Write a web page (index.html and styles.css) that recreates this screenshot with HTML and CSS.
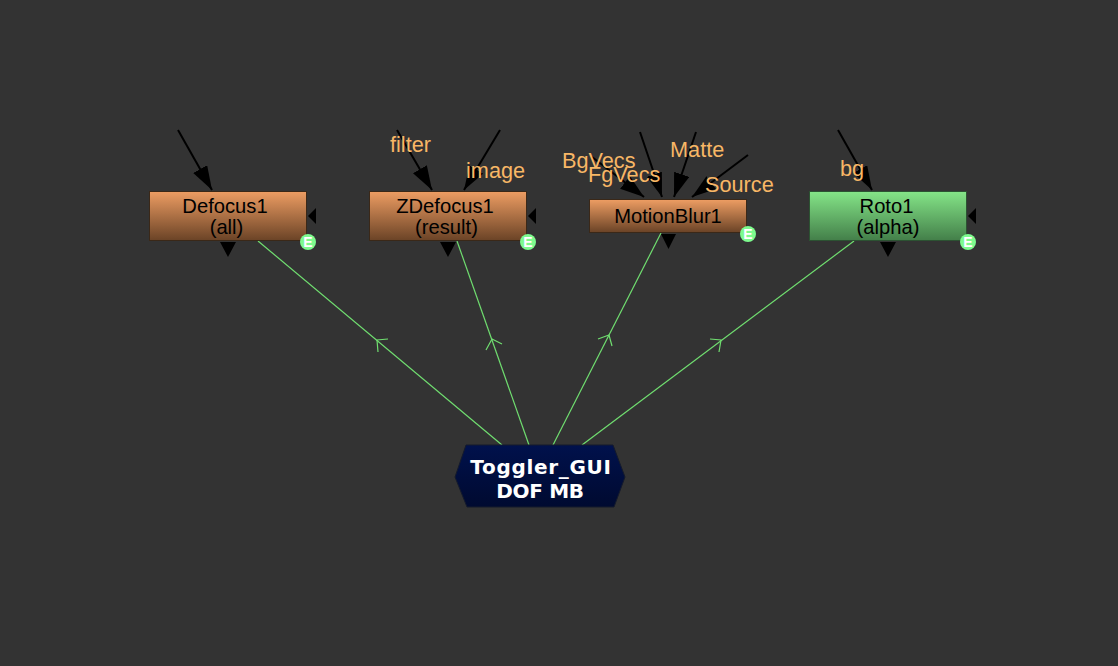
FILE: index.html
```html
<!DOCTYPE html>
<html lang="en">
<head>
<meta charset="utf-8">
<title>Toggler_GUI node graph</title>
<link rel="stylesheet" href="styles.css">
</head>
<body>
<main class="canvas">
  <svg class="wires" width="1118" height="666" viewBox="0 0 1118 666" xmlns="http://www.w3.org/2000/svg">
    <defs>
      <marker id="head" markerUnits="userSpaceOnUse" markerWidth="26" markerHeight="18" refX="24" refY="8" orient="auto">
        <path d="M0 0 L24 8 L0 16 Z" fill="#000"/>
      </marker>
      <linearGradient id="hexfill" x1="0" y1="0" x2="0" y2="1">
        <stop offset="0" stop-color="#00114c"/>
        <stop offset="1" stop-color="#000a30"/>
      </linearGradient>
    </defs>
    <g class="inputs">
      <line x1="178" y1="130" x2="212" y2="190" marker-end="url(#head)"/>
      <line x1="397" y1="130" x2="432" y2="190" marker-end="url(#head)"/>
      <line x1="500" y1="130" x2="464" y2="190" marker-end="url(#head)"/>
      <line x1="592" y1="157" x2="644" y2="197" marker-end="url(#head)"/>
      <line x1="640" y1="132" x2="662" y2="197" marker-end="url(#head)"/>
      <line x1="696" y1="132" x2="674" y2="197" marker-end="url(#head)"/>
      <line x1="748" y1="155" x2="692" y2="197" marker-end="url(#head)"/>
      <line x1="838" y1="130" x2="872" y2="190" marker-end="url(#head)"/>
    </g>
    <g class="edges">
      <line x1="258" y1="241" x2="502" y2="445"/>
      <line x1="457" y1="241" x2="529" y2="445"/>
      <line x1="661" y1="233" x2="553" y2="445"/>
      <line x1="854" y1="241" x2="582" y2="445"/>
      <polyline points="388,339 377,340 378,352"/>
      <polyline points="486,350 492,339 502,344"/>
      <polyline points="598,339 609,335 612,346"/>
      <polyline points="710,339 721,340 719,352"/>
    </g>
    <g class="pins">
      <path d="M220 242 H236 L228 257 Z"/>
      <path d="M308 216 L316 208 V224 Z"/>
      <path d="M440 242 H456 L448 257 Z"/>
      <path d="M528 216 L536 208 V224 Z"/>
      <path d="M661 234 H676 L668.5 249 Z"/>
      <path d="M880 242 H896 L888 257 Z"/>
      <path d="M968 216 L976 208 V224 Z"/>
    </g>
    <polygon class="hex" points="466,445 613,445 625,477 614,507 467,507 455,477"/>
  </svg>

  <div class="node node-defocus warm"><span class="nudged">Defocus1</span><span class="nudged-small">(all)</span></div>
  <div class="node node-zdefocus warm"><span class="nudged">ZDefocus1</span><span class="nudged-small">(result)</span></div>
  <div class="node node-motion warm"><span>MotionBlur1</span></div>
  <div class="node node-roto green"><span class="nudged-small">Roto1</span><span>(alpha)</span></div>

  <b class="badge badge-defocus">E</b>
  <b class="badge badge-zdefocus">E</b>
  <b class="badge badge-motion">E</b>
  <b class="badge badge-roto">E</b>

  <span class="label label-filter">filter</span>
  <span class="label label-image">image</span>
  <span class="label label-bg-vecs">BgVecs</span>
  <span class="label label-fg-vecs">FgVecs</span>
  <span class="label label-matte">Matte</span>
  <span class="label label-source">Source</span>
  <span class="label label-bg">bg</span>

  <div class="toggler"><span class="toggler-name">Toggler_GUI</span><span class="toggler-sub">DOF MB</span></div>
</main>
</body>
</html>
```
FILE: styles.css
```css
html, body {
  margin: 0;
  padding: 0;
  background: #333333;
  overflow: hidden;
}

.canvas {
  position: relative;
  width: 1118px;
  height: 666px;
  background: #333333;
  overflow: hidden;
  font-family: "Liberation Sans", Arial, sans-serif;
}

.wires {
  position: absolute;
  left: 0;
  top: 0;
}

.inputs line {
  stroke: #000;
  stroke-width: 2;
}

.edges line,
.edges polyline {
  stroke: #70de70;
  stroke-width: 1.2;
  fill: none;
}

.pins path {
  fill: #000;
}

.hex {
  fill: url(#hexfill);
  stroke: #141a2c;
  stroke-width: 1;
}

.node {
  position: absolute;
  box-sizing: border-box;
  width: 158px;
  height: 50px;
  border: 1px solid #3a2818;
  display: flex;
  flex-direction: column;
  align-items: center;
  justify-content: center;
  color: #000;
  font-size: 20.2px;
  line-height: 21px;
  padding-top: 1px;
}

.nudged {
  margin-right: 6px;
}

.nudged-small {
  margin-right: 3px;
}

.warm {
  background: linear-gradient(#ec9c62, #6c4427);
}

.green {
  background: linear-gradient(#84e487, #44804a);
  border-color: #2c5232;
}

.node-defocus { left: 149px; top: 191px; }
.node-zdefocus { left: 369px; top: 191px; }
.node-motion { left: 589px; top: 199px; height: 34px; }
.node-roto { left: 809px; top: 191px; }

.badge {
  position: absolute;
  width: 16px;
  height: 16px;
  border-radius: 50%;
  background: #7dfb8e;
  color: #fff;
  font-size: 14px;
  line-height: 16px;
  text-align: center;
}

.badge-defocus { left: 300px; top: 234px; }
.badge-zdefocus { left: 520px; top: 234px; }
.badge-motion { left: 740px; top: 226px; }
.badge-roto { left: 960px; top: 234px; }

.label {
  position: absolute;
  color: #f8b766;
  font-size: 21.7px;
  line-height: 24px;
  white-space: nowrap;
}

.label-filter { left: 390px; top: 133px; }
.label-image { left: 466px; top: 159px; }
.label-bg-vecs { left: 562px; top: 149px; }
.label-fg-vecs { left: 588px; top: 163px; }
.label-matte { left: 670px; top: 138px; }
.label-source { left: 705px; top: 173px; }
.label-bg { left: 840px; top: 157px; }

.toggler {
  position: absolute;
  left: 455px;
  top: 448px;
  width: 170px;
  height: 62px;
  display: flex;
  flex-direction: column;
  align-items: center;
  justify-content: center;
  color: #fff;
  font-family: "DejaVu Sans", Verdana, sans-serif;
  font-weight: 700;
  font-size: 20px;
  line-height: 24px;
}

.toggler-name {
  letter-spacing: 0.7px;
  margin-left: 2px;
}

.toggler-sub {
  letter-spacing: -0.3px;
}
```
